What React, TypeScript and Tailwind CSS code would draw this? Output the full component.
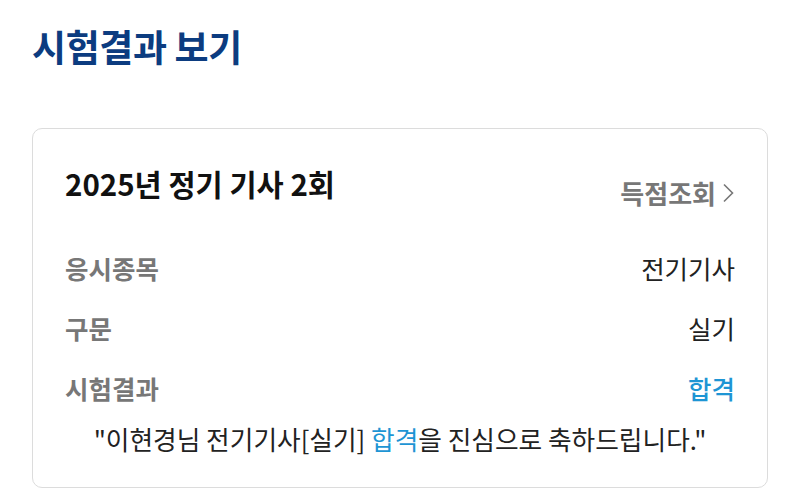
import React from 'react'

const rows = [
    { label: '응시종목', value: '전기기사' },
    { label: '구문', value: '실기' },
    { label: '시험결과', value: '합격', pass: true },
]

export default function App() {
    return (
        <main className="w-[800px] h-[501px] bg-white px-8 pt-[22px] font-['Noto_Sans_CJK_KR','Noto_Sans',sans-serif]">
            <h1 className="text-[37px] leading-[48px] font-bold text-[#0c3c80] tracking-[-0.4px]">시험결과 보기</h1>

            <section className="mt-[58px] border border-[#dcdcdc] rounded-[10px] px-8 pt-[34px] pb-[30px]">
                <div className="flex justify-between">
                    <h2 className="text-[29.5px] leading-[40px] font-bold text-[#111]">2025년 정기 기사 2회</h2>
                    <button className="mt-[12px] flex items-center gap-[5px] text-[26px] leading-[36px] font-bold text-[#777]">
                        득점조회
                        <svg width="14" height="24" viewBox="0 0 14 24" fill="none" stroke="#777" strokeWidth="1.6">
                            <path d="M3 3.5l8.5 8.5-8.5 8.5" />
                        </svg>
                    </button>
                </div>

                <div className="mt-[39px] flex flex-col gap-[24px]">
                    {rows.map((r) => (
                        <div key={r.label} className="flex justify-between text-[25.5px] leading-[36px]">
                            <span className="font-bold text-[#777]">{r.label}</span>
                            <span className={r.pass ? 'font-medium text-[#1e95d4]' : 'text-[#222]'}>{r.value}</span>
                        </div>
                    ))}
                </div>

                <p className="mt-[15px] text-center text-[25.7px] leading-[36px] text-[#222]">
                    "이현경님 전기기사[실기] <span className="text-[#1e95d4]">합격</span>을 진심으로 축하드립니다."
                </p>
            </section>
        </main>
    )
}
